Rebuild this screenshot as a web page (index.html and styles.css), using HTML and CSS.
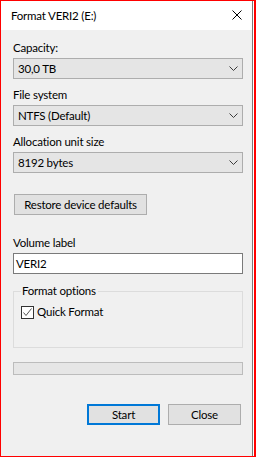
FILE: index.html
```html
<!DOCTYPE html>
<html lang="en">
<head>
    <meta charset="UTF-8">
    <meta name="viewport" content="width=device-width, initial-scale=1.0">
    <title>Format VERI2 (E:)</title>
<link rel="stylesheet" href="styles.css">
</head>
<body>
  <div class="frame">
    <div class="window">
      <div class="titlebar">
        <span class="title">Format VERI2 (E:)</span>
        <svg class="close" width="10" height="10" viewBox="0 0 10 10">
          <path d="M0.5 0.5 L9.5 9.5 M9.5 0.5 L0.5 9.5" stroke="#000" stroke-width="1" fill="none"/>
        </svg>
      </div>

      <div class="content">
        <div class="field">
          <div class="label">Capacity:</div>
          <div class="combo"><span>30,0 TB</span>
            <svg class="chev" width="9" height="5" viewBox="0 0 9 5"><path d="M0.5 0.5 L4.5 4.5 L8.5 0.5" stroke="#3c3c3c" fill="none"/></svg>
          </div>
        </div>
        <div class="field">
          <div class="label">File system</div>
          <div class="combo"><span>NTFS (Default)</span>
            <svg class="chev" width="9" height="5" viewBox="0 0 9 5"><path d="M0.5 0.5 L4.5 4.5 L8.5 0.5" stroke="#3c3c3c" fill="none"/></svg>
          </div>
        </div>
        <div class="field">
          <div class="label">Allocation unit size</div>
          <div class="combo"><span>8192 bytes</span>
            <svg class="chev" width="9" height="5" viewBox="0 0 9 5"><path d="M0.5 0.5 L4.5 4.5 L8.5 0.5" stroke="#3c3c3c" fill="none"/></svg>
          </div>
        </div>

        <button class="btn restore">Restore device defaults</button>

        <div class="field volume">
          <div class="label">Volume label</div>
          <div class="textbox">VERI2</div>
        </div>

        <fieldset class="group">
          <legend>Format options</legend>
          <div class="check">
            <span class="box">
              <svg width="11" height="11" viewBox="0 0 11 11"><path d="M1.5 5.5 L4 8.5 L9.5 1.5" stroke="#555" stroke-width="1" fill="none"/></svg>
            </span>
            Quick Format
          </div>
        </fieldset>

        <div class="progress"></div>

        <div class="actions">
          <button class="btn default">Start</button>
          <button class="btn">Close</button>
        </div>
      </div>
    </div>
  </div>
</body>
</html>
```

FILE: styles.css
```css
body {
  margin: 0;
  font-family: Lato, "Noto Sans", sans-serif;
  font-size: 11.5px;
  letter-spacing: -0.2px;
  line-height: 16px;
  color: #000;
}

.frame {
  width: 256px;
  height: 457px;
  box-sizing: border-box;
  border: 1px solid #f00;
  border-right-width: 2px;
  background: #fff;
}

.window {
  width: 252px;
  height: 100%;
  box-sizing: border-box;
  border-right: 1px solid #7a7a7a;
  display: flex;
  flex-direction: column;
}

.titlebar {
  height: 29px;
  background: #fff;
  display: flex;
  align-items: center;
  justify-content: space-between;
  padding: 0 10px 0 10px;
}
.close { margin-top: -1px; }

.content {
  flex: 1;
  background: #f0f0f0;
  padding: 10px 0 0 12px;
}

.field + .field { margin-top: 8px; }
.label { height: 16px; }

.combo {
  width: 230px;
  height: 21px;
  margin-top: 2px;
  box-sizing: border-box;
  border: 1px solid #adadad;
  background: #e5e5e5;
  display: flex;
  align-items: center;
  justify-content: space-between;
  padding: 0 4px 0 4px;
}

.btn {
  font: inherit;
  letter-spacing: inherit;
  color: #000;
  height: 21px;
  box-sizing: border-box;
  border: 1px solid #adadad;
  background: #e1e1e1;
  padding: 0;
}
.restore {
  display: block;
  width: 133px;
  margin: 21px 0 0 1px;
}

.field.volume { margin-top: 20px; }
.textbox {
  width: 230px;
  height: 21px;
  margin-top: 2px;
  box-sizing: border-box;
  border: 1px solid #7a7a7a;
  background: #fff;
  padding: 0 2px;
  line-height: 19px;
}

.group {
  width: 230px;
  box-sizing: border-box;
  margin: 9px 0 0;
  border: 1px solid #dcdcdc;
  padding: 5px 7px 27px;
}
.group legend {
  padding: 0 2px 0 1px;
  line-height: 16px;
}

.check {
  display: flex;
  align-items: center;
  gap: 3px;
}
.box {
  width: 13px;
  height: 13px;
  box-sizing: border-box;
  border: 1px solid #333;
  background: #fff;
  display: flex;
}

.progress {
  width: 230px;
  height: 13px;
  margin-top: 14px;
  box-sizing: border-box;
  border: 1px solid #bcbcbc;
  background: #e6e6e6;
}

.actions {
  width: 228px;
  margin-top: 29px;
  display: flex;
  justify-content: flex-end;
  gap: 8px;
}
.actions .btn { width: 73px; }
.btn.default { border: 2px solid #0078d7; }
```
